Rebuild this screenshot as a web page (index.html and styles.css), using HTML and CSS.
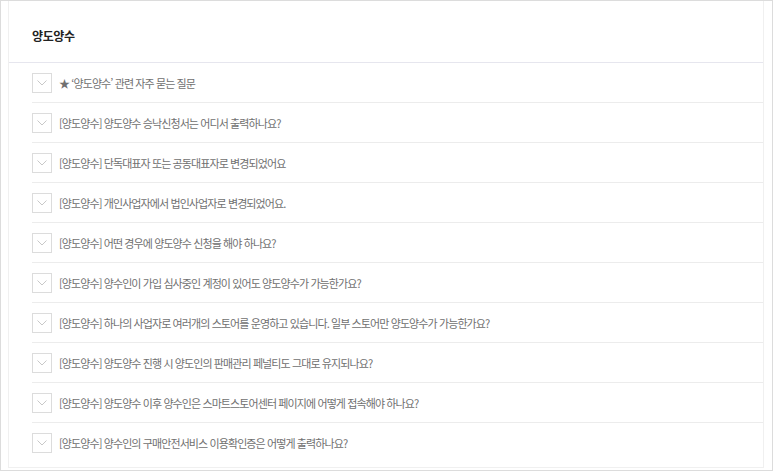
FILE: index.html
```html
<!DOCTYPE html>
<html lang="ko">
<head>
<meta charset="utf-8">
<link rel="stylesheet" href="styles.css">
</head>
<body>
<div class="frame">
  <div class="panel">
    <div class="header"><h1 class="title">양도양수</h1></div>
    <ul class="faq">
      <li class="row"><span class="toggle"><svg width="10" height="6" viewBox="0 0 10 6"><path d="M0.5 0.5 L5 5 L9.5 0.5" fill="none" stroke="#c8c8c8" stroke-width="1"/></svg></span><span class="q">★ ‘양도양수’ 관련 자주 묻는 질문</span></li>
      <li class="row"><span class="toggle"><svg width="10" height="6" viewBox="0 0 10 6"><path d="M0.5 0.5 L5 5 L9.5 0.5" fill="none" stroke="#c8c8c8" stroke-width="1"/></svg></span><span class="q">[양도양수] 양도양수 승낙신청서는 어디서 출력하나요?</span></li>
      <li class="row"><span class="toggle"><svg width="10" height="6" viewBox="0 0 10 6"><path d="M0.5 0.5 L5 5 L9.5 0.5" fill="none" stroke="#c8c8c8" stroke-width="1"/></svg></span><span class="q">[양도양수] 단독대표자 또는 공동대표자로 변경되었어요</span></li>
      <li class="row"><span class="toggle"><svg width="10" height="6" viewBox="0 0 10 6"><path d="M0.5 0.5 L5 5 L9.5 0.5" fill="none" stroke="#c8c8c8" stroke-width="1"/></svg></span><span class="q">[양도양수] 개인사업자에서 법인사업자로 변경되었어요.</span></li>
      <li class="row"><span class="toggle"><svg width="10" height="6" viewBox="0 0 10 6"><path d="M0.5 0.5 L5 5 L9.5 0.5" fill="none" stroke="#c8c8c8" stroke-width="1"/></svg></span><span class="q">[양도양수] 어떤 경우에 양도양수 신청을 해야 하나요?</span></li>
      <li class="row"><span class="toggle"><svg width="10" height="6" viewBox="0 0 10 6"><path d="M0.5 0.5 L5 5 L9.5 0.5" fill="none" stroke="#c8c8c8" stroke-width="1"/></svg></span><span class="q">[양도양수] 양수인이 가입 심사중인 계정이 있어도 양도양수가 가능한가요?</span></li>
      <li class="row"><span class="toggle"><svg width="10" height="6" viewBox="0 0 10 6"><path d="M0.5 0.5 L5 5 L9.5 0.5" fill="none" stroke="#c8c8c8" stroke-width="1"/></svg></span><span class="q">[양도양수] 하나의 사업자로 여러개의 스토어를 운영하고 있습니다. 일부 스토어만 양도양수가 가능한가요?</span></li>
      <li class="row"><span class="toggle"><svg width="10" height="6" viewBox="0 0 10 6"><path d="M0.5 0.5 L5 5 L9.5 0.5" fill="none" stroke="#c8c8c8" stroke-width="1"/></svg></span><span class="q">[양도양수] 양도양수 진행 시 양도인의 판매관리 페널티도 그대로 유지되나요?</span></li>
      <li class="row"><span class="toggle"><svg width="10" height="6" viewBox="0 0 10 6"><path d="M0.5 0.5 L5 5 L9.5 0.5" fill="none" stroke="#c8c8c8" stroke-width="1"/></svg></span><span class="q">[양도양수] 양도양수 이후 양수인은 스마트스토어센터 페이지에 어떻게 접속해야 하나요?</span></li>
      <li class="row"><span class="toggle"><svg width="10" height="6" viewBox="0 0 10 6"><path d="M0.5 0.5 L5 5 L9.5 0.5" fill="none" stroke="#c8c8c8" stroke-width="1"/></svg></span><span class="q">[양도양수] 양수인의 구매안전서비스 이용확인증은 어떻게 출력하나요?</span></li>
    </ul>
  </div>
</div>
</body>
</html>
```
FILE: styles.css
```css
html, body {
  margin: 0;
  padding: 0;
  background: #fff;
}
body {
  font-family: "Noto Sans CJK KR", "Noto Sans", sans-serif;
}
.frame {
  box-sizing: border-box;
  width: 773px;
  height: 471px;
  border: 1px solid #dcdcdc;
  padding: 0 8px 2px 7px;
}
.panel {
  box-sizing: border-box;
  height: 100%;
  border-left: 1px solid #f0f0f0;
  border-right: 1px solid #f0f0f0;
  border-bottom: 1px solid #f0f0f0;
  background: #fff;
}
.header {
  height: 62px;
  border-bottom: 1px solid #e6e6ee;
  padding-left: 23px;
  display: flex;
  align-items: center;
  box-sizing: border-box;
  padding-top: 8px;
}
.title {
  margin: 0;
  font-size: 12px;
  font-weight: 700;
  color: #222;
  letter-spacing: -0.4px;
}
.faq {
  list-style: none;
  margin: 0;
  padding: 0 0 0 23px;
}
.row {
  height: 39px;
  display: flex;
  align-items: center;
  gap: 7px;
  border-bottom: 1px solid #ececec;
}
.row:last-child {
  border-bottom: none;
}
.toggle {
  box-sizing: border-box;
  width: 20px;
  height: 20px;
  border: 1px solid #dcdcdc;
  display: flex;
  align-items: center;
  justify-content: center;
  flex: none;
}
.q {
  font-size: 11px;
  color: #707070;
  letter-spacing: -0.9px;
  white-space: nowrap;
}
```
